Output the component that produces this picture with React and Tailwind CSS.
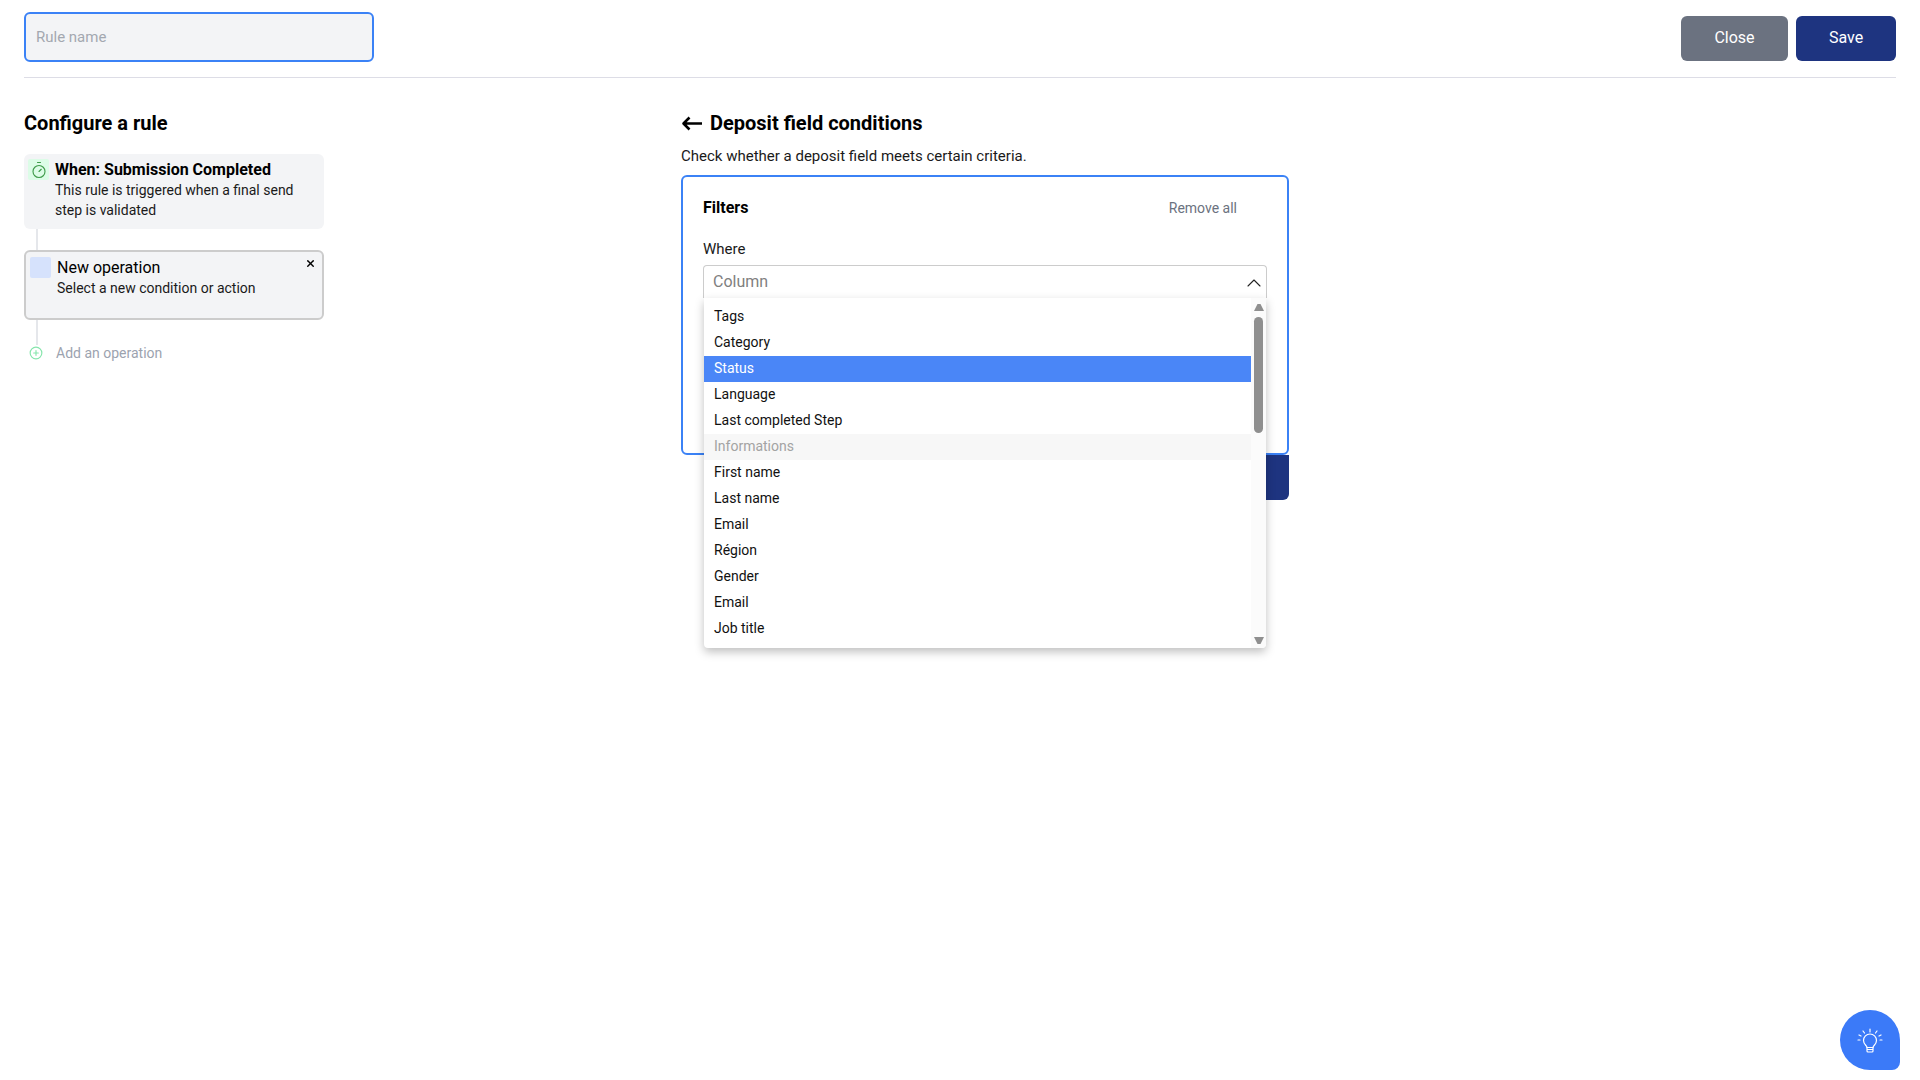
import React from "react";
import { Timer, X, CirclePlus, ChevronUp } from "lucide-react";

const options = [
  { label: "Tags" },
  { label: "Category" },
  { label: "Status", active: true },
  { label: "Language" },
  { label: "Last completed Step" },
  { label: "Informations", group: true },
  { label: "First name" },
  { label: "Last name" },
  { label: "Email" },
  { label: "Région" },
  { label: "Gender" },
  { label: "Email" },
  { label: "Job title" },
];

function optionClass(option) {
  if (option.active) return "h-[26px] pl-[10px] leading-[24px] bg-[#4a86f7] text-white";
  if (option.group) return "h-[26px] pl-[10px] leading-[24px] bg-[#f7f7f7] text-[#a3a3a3]";
  return "h-[26px] pl-[10px] leading-[24px] text-[#111111]";
}

function Dropdown() {
  return (
    <div className="absolute left-0 right-0 top-full z-10 flex h-[350px] rounded-b-[4px] bg-white text-sm shadow-[0_4px_10px_rgba(0,0,0,0.25)]">
      <div className="flex-1 pt-[6px]">
        {options.map((option, i) => (
          <div key={i} className={optionClass(option)}>
            {option.label}
          </div>
        ))}
      </div>
      <div className="flex w-[15px] flex-col items-center rounded-br-[4px] bg-[#fbfbfb] pb-[4px] pt-[6px]">
        <svg width="10" height="7" viewBox="0 0 10 7" className="text-[#8f8f8f]">
          <path d="M3.5 0h3L10 7H0z" fill="currentColor" />
        </svg>
        <div className="mt-[6px] h-[116px] w-[9px] rounded-full bg-[#8f8f8f]" />
        <div className="flex-1" />
        <svg width="10" height="7" viewBox="0 0 10 7" className="text-[#8f8f8f]">
          <path d="M0 0H10L6.5 7h-3z" fill="currentColor" />
        </svg>
      </div>
    </div>
  );
}

function BulbButton() {
  return (
    <button className="fixed bottom-[10px] right-[20px] flex h-[60px] w-[60px] items-center justify-center rounded-[30px_30px_8px_30px] bg-[#3b7af8] pt-1 text-white">
      <svg width="32" height="32" viewBox="0 0 32 32" fill="none" stroke="currentColor" strokeWidth="1.2" strokeLinecap="round">
        <path d="M13 21.5c0-2-3.5-3-3.5-7a6.5 6.5 0 0 1 13 0c0 4-3.5 5-3.5 7z" />
        <path d="M13 21.5v3.5c0 .6.5 1 1 1h4c.5 0 1-.4 1-1v-3.5M13 23.5h6" />
        <path d="M16 3v3M9 5l1.5 2M23 5l-1.5 2M5 9l2 1M27 9l-2 1M4 14h2M26 14h2" />
      </svg>
    </button>
  );
}

export default function App() {
  return (
    <div className="min-h-screen bg-white px-6 font-['Roboto',sans-serif] text-black">
      <header className="flex h-[78px] items-start justify-between border-b border-[#dddde6] pt-3">
        <input
          placeholder="Rule name"
          className="h-[50px] w-[350px] rounded-md border-2 border-[#3b82f6] bg-[#f3f4f6] px-[10px] text-[15px] outline-none placeholder:text-[#a3a8b0]"
        />
        <div className="mt-1 flex gap-2">
          <button className="h-[45px] w-[107px] rounded-md bg-[#6b7280] pb-px text-base text-white">Close</button>
          <button className="h-[45px] w-[100px] rounded-md bg-[#1e3480] pb-px text-base text-white">Save</button>
        </div>
      </header>

      <main className="flex pt-[31px]">
        <section className="w-[300px]">
          <h2 className="text-xl font-bold leading-7">Configure a rule</h2>

          <div className="mt-[17px] flex h-[75px] gap-[6px] rounded-md bg-[#f3f4f6] pl-1 pt-[5px]">
            <div className="flex h-[21px] w-[21px] shrink-0 items-center justify-center rounded-[2px] bg-[#dcfce7] text-[#3f9b4a]">
              <Timer size={18} strokeWidth={1.5} />
            </div>
            <div className="pt-px">
              <div className="text-base font-bold leading-5">When: Submission Completed</div>
              <div className="w-[245px] text-sm leading-5 text-[#1a1a1a]">
                This rule is triggered when a final send step is validated
              </div>
            </div>
          </div>

          <div className="ml-3 h-[21px] w-[2px] bg-[#e5e7eb]" />

          <div className="relative flex h-[70px] gap-[6px] rounded-md border-2 border-[#cccccc] bg-[#f3f4f6] pl-1 pt-[5px]">
            <div className="h-[21px] w-[21px] shrink-0 rounded-[2px] bg-[#d6e2fc]" />
            <div className="pt-px">
              <div className="text-base leading-5">New operation</div>
              <div className="text-sm leading-5 text-[#1a1a1a]">Select a new condition or action</div>
            </div>
            <X size={11} strokeWidth={3} className="absolute right-[6px] top-[6px]" />
          </div>

          <div className="ml-3 h-[25px] w-[2px] bg-[#e5e7eb]" />

          <div className="flex h-4 items-center gap-[13px] pl-[5px]">
            <CirclePlus size={14} className="text-[#86e5ac]" />
            <span className="text-sm text-[#9ca3af]">Add an operation</span>
          </div>
        </section>

        <section className="ml-[357px] w-[608px]">
          <div className="flex h-7 items-center gap-[8px]">
            <svg width="21" height="15" viewBox="0 0 21 15" fill="none" stroke="currentColor" strokeWidth="2.6" strokeLinejoin="round">
              <path d="M21 7.5H2.5M8.5 1.5L2.5 7.5l6 6" />
            </svg>
            <h2 className="text-xl font-bold leading-7">Deposit field conditions</h2>
          </div>
          <p className="mt-[9px] text-[15px] leading-5 text-[#1a1a1a]">Check whether a deposit field meets certain criteria.</p>

          <div className="mt-[9px] h-[280px] rounded-md border-2 border-[#3b82f6] px-5 pt-[19px]">
            <div className="flex items-center justify-between">
              <span className="text-base font-bold leading-6">Filters</span>
              <span className="mr-[30px] text-sm text-[#6b7280]">Remove all</span>
            </div>
            <div className="mt-[19px] text-[15px] leading-5 text-[#1a1a1a]">Where</div>
            <div className="relative mt-[6px] flex h-[33px] items-center justify-between rounded-t-[4px] border-x border-t border-[#cccccc] pl-[9px]">
              <span className="text-base text-[#808080]">Column</span>
              <ChevronUp size={24} strokeWidth={1.1} className="mt-[2px] text-[#222222]" />
              <Dropdown />
            </div>
          </div>
          <div className="flex justify-end">
            <button className="h-[45px] w-[200px] rounded-b-md bg-[#1e3480]" />
          </div>
        </section>
      </main>

      <BulbButton />
    </div>
  );
}
